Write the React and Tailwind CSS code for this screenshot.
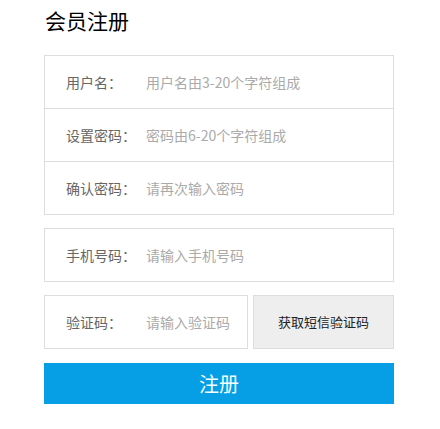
import React from 'react';

const font = { fontFamily: '"Noto Sans CJK SC", "Microsoft YaHei", sans-serif' };

function Field({ label, placeholder, type = 'text', className = 'h-[52px]' }) {
    return (
        <div className={`flex items-center pl-[21px] ${className}`}>
            <label className="w-[80px] shrink-0 text-[14px] text-[#666]">{label}</label>
            <input
                type={type}
                placeholder={placeholder}
                className="flex-1 min-w-0 bg-transparent text-[14px] text-[#333] outline-none placeholder:text-[#aaa]"
            />
        </div>
    );
}

export default function App() {
    return (
        <div className="w-[440px] h-[429px] bg-white pl-[44px]" style={font}>
            <h2 className="text-[21px] leading-[40px] text-black pl-px">会员注册</h2>

            <div className="mt-[15px] w-[350px] border border-[#ddd]">
                <Field label="用户名：" placeholder="用户名由3-20个字符组成" />
                <Field label="设置密码：" placeholder="密码由6-20个字符组成" type="password" className="h-[53px] border-t border-[#ddd]" />
                <Field label="确认密码：" placeholder="请再次输入密码" type="password" className="h-[53px] border-t border-[#ddd]" />
            </div>

            <div className="mt-[13px] w-[350px] border border-[#ddd]">
                <Field label="手机号码：" placeholder="请输入手机号码" />
            </div>

            <div className="mt-[13px] w-[350px] flex gap-[5px]">
                <div className="w-[204px] border border-[#ddd]">
                    <Field label="验证码：" placeholder="请输入验证码" />
                </div>
                <button className="flex-1 h-[54px] border border-[#ddd] bg-[#eee] text-[13px] text-[#222]">
                    获取短信验证码
                </button>
            </div>

            <button className="mt-[14px] w-[350px] h-[41px] bg-[#069fe5] text-[20px] text-[#f4feff]">
                注册
            </button>
        </div>
    );
}
